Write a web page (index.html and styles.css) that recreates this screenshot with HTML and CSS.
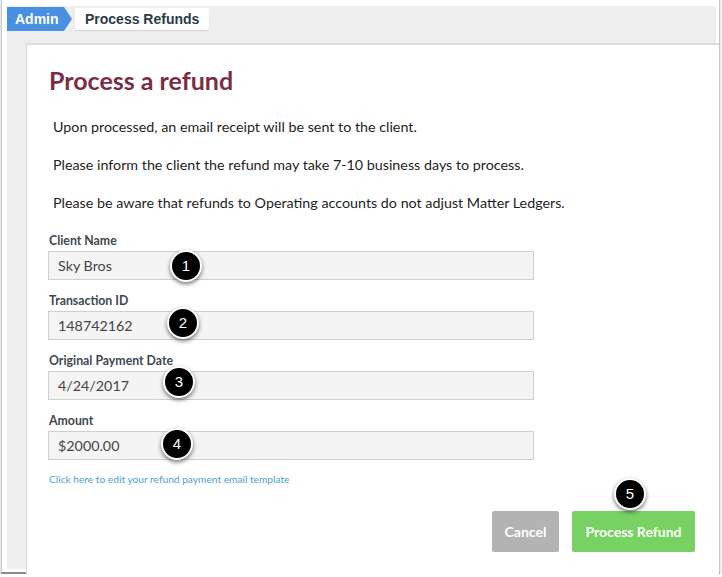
FILE: index.html
```html
<!DOCTYPE html>
<html lang="en">
<head>
	<meta charset="UTF-8" />
	<title>Process a refund</title>
	<link rel="stylesheet" href="styles.css">
</head>
<body>
	<div class="window">
		<div class="panel">
			<div class="crumbs">
				<span class="crumb_admin">Admin</span>
				<span class="crumb_page">Process Refunds</span>
			</div>
			<div class="card">
				<h1 class="title">Process a refund</h1>
				<p class="note">Upon processed, an email receipt will be sent to the client.</p>
				<p class="note">Please inform the client the refund may take 7-10 business days to process.</p>
				<p class="note">Please be aware that refunds to Operating accounts do not adjust Matter Ledgers.</p>

				<div class="field">
					<label>Client Name</label>
					<div class="input">Sky Bros</div>
				</div>
				<div class="field">
					<label>Transaction ID</label>
					<div class="input">148742162</div>
				</div>
				<div class="field">
					<label>Original Payment Date</label>
					<div class="input">4/24/2017</div>
				</div>
				<div class="field">
					<label>Amount</label>
					<div class="input">$2000.00</div>
				</div>

				<a class="template_link">Click here to edit your refund payment email template</a>

				<div class="actions">
					<button class="btn btn_cancel">Cancel</button>
					<button class="btn btn_go">Process Refund</button>
				</div>

				<span class="badge b1">1</span>
				<span class="badge b2">2</span>
				<span class="badge b3">3</span>
				<span class="badge b4">4</span>
				<span class="badge b5">5</span>
			</div>
		</div>
	</div>
</body>
</html>
```

FILE: styles.css
```css
body{
	margin:0;
	background: #fff;
	font-family: Lato, "Open Sans", sans-serif;
}

.window{
	margin-left: 1px;
	width: 719px;
	height: 574px;
	border-left: 1px solid #c8c8c8;
	border-right: 1px solid #c8c8c8;
	border-bottom: 2px solid #8a8a8a;
	box-shadow: 0 1px 2px rgba(0,0,0,0.3);
	box-sizing: border-box;
	padding: 6px 3px 0 5px;
}

.panel{
	background-color: #eeeeee;
	height: 563px;
	padding-left: 19px;
	position: relative;
}

.crumbs{
	height: 37px;
	margin-left: -19px;
	display: flex;
	align-items: flex-start;
	padding-top: 1px;
	box-sizing: border-box;
	font-family: "Liberation Sans", Arial, sans-serif;
}

.crumb_admin{
	position: relative;
	background-color: #4a90e2;
	color: #fff;
	font-weight: bold;
	font-size: 14px;
	height: 24px;
	line-height: 24px;
	padding: 0 0 0 8px;
	width: 49px;
}

.crumb_admin::after{
	content: "";
	position: absolute;
	right: -8px;
	top: 0;
	border-left: 8px solid #4a90e2;
	border-top: 12px solid transparent;
	border-bottom: 12px solid transparent;
}

.crumb_page{
	margin-left: 11px;
	margin-top: 1px;
	background: #fff;
	color: #2b3a47;
	font-weight: bold;
	font-size: 14px;
	height: 22px;
	line-height: 22px;
	padding: 0 10px 0 10px;
	border-radius: 2px;
	box-shadow: 0 1px 1px rgba(0,0,0,0.12);
}

.card{
	position: relative;
	background: #fff;
	border-left: 1px solid #d8d8d8;
	border-top: 2px solid #dcdcdc;
	height: 535px;
	margin-right: -3px;
	padding: 19px 0 0 22px;
	box-sizing: border-box;
}

.title{
	margin: 0 0 21px;
	font-size: 25px;
	line-height: 32px;
	color: #7a2e42;
	font-weight: bold;
}

.note{
	margin: 0 0 18px 4px;
	font-size: 14.3px;
	line-height: 20px;
	color: #1e1e1e;
}

.field label{
	display: block;
	font-size: 12.3px;
	font-weight: bold;
	color: #3d4852;
	line-height: 20px;
}

.field .input{
	width: 486px;
	height: 29px;
	box-sizing: border-box;
	background: #f4f4f4;
	border: 1px solid #cfcfcf;
	font-size: 14.3px;
	color: #444;
	line-height: 27px;
	padding-left: 9px;
	margin-left: -1px;
	margin-bottom: 11px;
}

.template_link{
	display: block;
	font-size: 10.2px;
	color: #4a9fd8;
	line-height: 16px;
	margin-top: 1px;
}

.actions{
	display: flex;
	justify-content: flex-end;
	gap: 13px;
	margin-top: 24px;
	padding-right: 24px;
}

.btn{
	border: 0;
	border-radius: 2px;
	color: #fff;
	font-family: Lato, "Open Sans", sans-serif;
	font-weight: bold;
	font-size: 14px;
	height: 41px;
}

.btn_cancel{
	background: #b3b3b3;
	width: 67px;
}

.btn_go{
	background: #78d163;
	width: 123px;
}

.badge{
	position: absolute;
	width: 32px;
	height: 32px;
	box-sizing: border-box;
	border: 2px solid #fff;
	border-radius: 50%;
	background: #000;
	color: #fff;
	font-family: "Liberation Sans", Arial, sans-serif;
	font-size: 15px;
	line-height: 28px;
	text-align: center;
	box-shadow: 0 2px 4px rgba(0,0,0,0.55);
}

.b1{ left: 143px; top: 205px; }
.b2{ left: 140px; top: 262px; }
.b3{ left: 136px; top: 321px; }
.b4{ left: 134px; top: 383px; }
.b5{ left: 587px; top: 433px; }
```
